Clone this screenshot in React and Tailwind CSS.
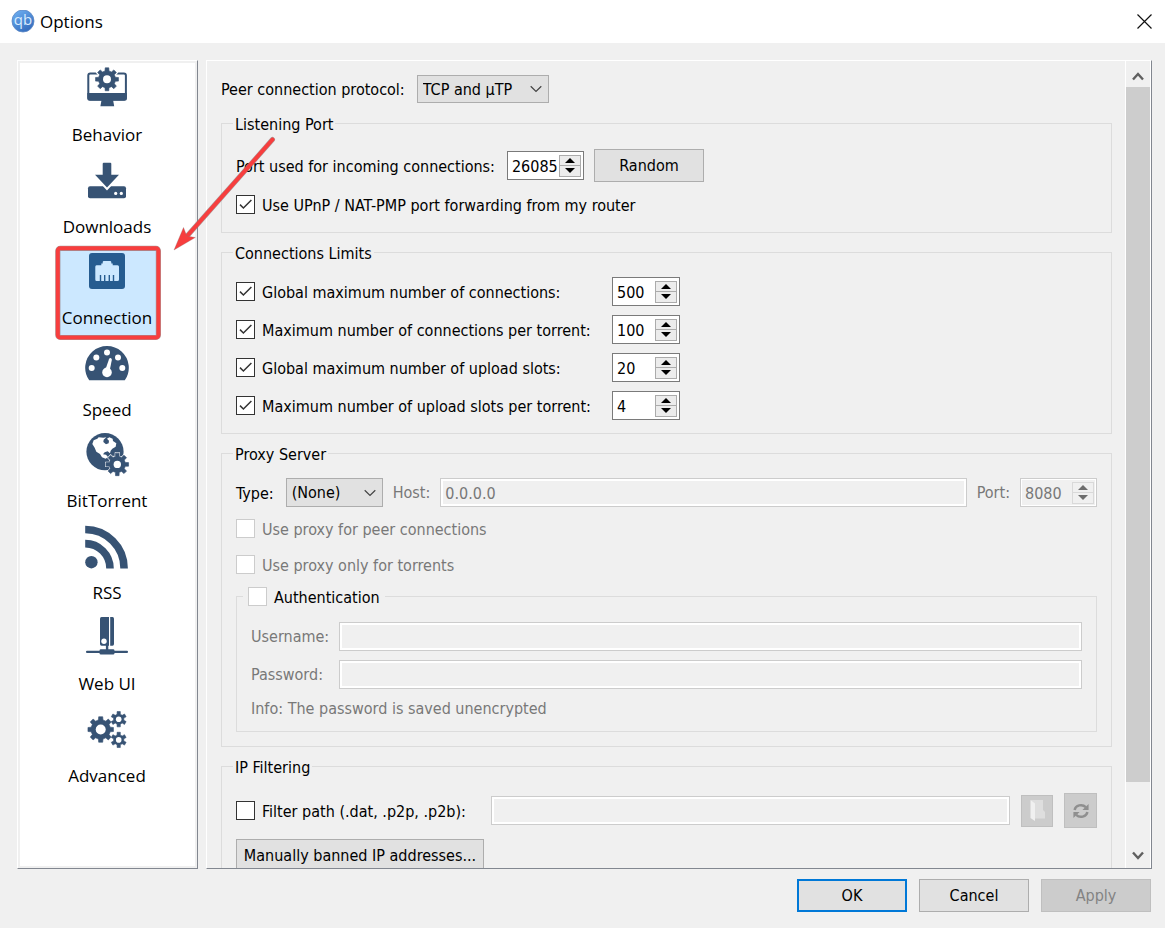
import { useState } from 'react';

const NAVY = '#375374';

function gearPath(cx, cy, outer, inner, teeth) {
  const step = (Math.PI * 2) / teeth;
  const at = (r, a) => `${(cx + r * Math.cos(a)).toFixed(2)} ${(cy + r * Math.sin(a)).toFixed(2)}`;
  const points = [];
  for (let i = 0; i < teeth; i++) {
    const a = i * step - Math.PI / 2;
    points.push(at(inner, a - step * 0.3), at(outer, a - step * 0.2), at(outer, a + step * 0.2), at(inner, a + step * 0.3));
  }
  return `M${points.join('L')}Z`;
}

function Gear({ cx, cy, outer, inner, hole, teeth = 8, halo = 0 }) {
  const d = gearPath(cx, cy, outer, inner, teeth);
  return (
    <>
      {halo > 0 && <path d={d} fill="#fff" stroke="#fff" strokeWidth={halo * 2} />}
      <path d={d} fill={NAVY} stroke={NAVY} strokeWidth="0.6" strokeLinejoin="round" />
      <circle cx={cx} cy={cy} r={hole} fill="#fff" />
    </>
  );
}

function BehaviorIcon() {
  return (
    <>
      <rect x="5.3" y="9.6" width="37.6" height="26" rx="2" fill="#fff" stroke={NAVY} strokeWidth="2" />
      <path d="M4.3 29H43.9V34.2A2.5 2.5 0 0 1 41.4 36.7H30.2L31.2 42.3H17.4L18.4 36.7H6.8A2.5 2.5 0 0 1 4.3 34.2Z" fill={NAVY} />
      <Gear cx={24} cy={15.3} outer={11.6} inner={8.6} hole={4} halo={1.4} />
    </>
  );
}

function DownloadsIcon() {
  return (
    <>
      <rect x="5" y="30.2" width="38" height="12" rx="2" fill={NAVY} />
      <path d="M12 18.8H19.7V7.8Q19.7 6.8 20.7 6.8H27.3Q28.3 6.8 28.3 7.8V18.8H36L24 31.6Z" fill="#fff" stroke="#fff" strokeWidth="4" />
      <path d="M12 18.8H19.7V7.8Q19.7 6.8 20.7 6.8H27.3Q28.3 6.8 28.3 7.8V18.8H36L24 31.6Z" fill={NAVY} />
      <circle cx="32.7" cy="37.4" r="1.6" fill="#fff" />
      <circle cx="38.3" cy="37.4" r="1.6" fill="#fff" />
    </>
  );
}

function ConnectionIcon() {
  return (
    <>
      <rect x="6" y="6" width="36" height="36" rx="3" fill="#265c90" />
      <path d="M13.5 18.3H18.3V16.4H19.7V15.2Q19.7 14 20.9 14H27.1Q28.3 14 28.3 15.2V16.4H29.7V18.3H34.5Q36 18.3 36 19.8V32.5Q36 34 34.5 34H13.5Q12.3 34 12.3 32.5V19.8Q12.3 18.3 13.5 18.3Z" fill="#cce8ff" />
      <path d="M17.5 28V34M21.7 28V34M26.3 28V34M30.5 28V34" stroke="#265c90" strokeWidth="1.4" />
    </>
  );
}

function SpeedIcon() {
  return (
    <>
      <path d="M6.2 41.3A21.8 21.8 0 1 1 41.8 41.3Z" fill={NAVY} />
      <g fill="#fff">
        <circle cx="8.7" cy="29" r="3" />
        <circle cx="13.3" cy="18.5" r="3" />
        <circle cx="24" cy="13.5" r="3" />
        <circle cx="35" cy="18.5" r="3" />
        <circle cx="39.3" cy="29" r="3" />
        <circle cx="24" cy="33.4" r="4.8" />
        <path d="M26 20.2Q26.6 18.8 28 19.2Q29 19.6 28.8 21L26.8 31L22.6 30Z" />
      </g>
    </>
  );
}

function BitTorrentIcon() {
  return (
    <>
      <circle cx="22" cy="21.7" r="18.6" fill={NAVY} />
      <g transform="translate(-43 -95) scale(0.3333)">
        <path
          d="M157 327L161 316L172 311L176 307L190 308L199 307L191 314L190 321L198 328L206 325L207 317L201 311L208 307L218 311L219 318L229 325L227 335L217 341L212 347L210 355L203 349L194 352L189 358L198 359L204 366L197 371L186 367L180 357L169 350L164 338Z"
          fill="#fff"
        />
        <path d="M206 366L222 362L234 372L228 392L222 402L210 388Z" fill="#fff" />
      </g>
      <Gear cx={34.3} cy={34.4} outer={11.4} inner={8.2} hole={3.7} halo={0.8} />
    </>
  );
}

function RssIcon() {
  return (
    <>
      <circle cx="8.4" cy="40.2" r="6.2" fill={NAVY} />
      <path d="M2.2 21.6A24.8 24.8 0 0 1 27 46.4" fill="none" stroke={NAVY} strokeWidth="7.6" />
      <path d="M2.2 7.5A38.9 38.9 0 0 1 41.1 46.4" fill="none" stroke={NAVY} strokeWidth="7.6" />
    </>
  );
}

function WebUiIcon() {
  return (
    <g fill={NAVY}>
      <path d="M18.5 4H26V32.7H18.5Q17 32.7 17 31V5.6Q17 4 18.5 4Z" />
      <path d="M27.2 4H29.6Q31 4 31 5.6V31Q31 32.7 29.6 32.7H27.2Z" />
      <rect x="22.9" y="32" width="2.4" height="6" />
      <rect x="16.6" y="36.2" width="14.8" height="5.2" rx="1.2" />
      <rect x="3" y="37.8" width="42" height="2.2" rx="1" />
      <circle cx="21" cy="28.3" r="2.7" fill="#fff" />
    </g>
  );
}

function AdvancedIcon() {
  return (
    <>
      <Gear cx={17.7} cy={24.5} outer={12.9} inner={9.8} hole={5} />
      <Gear cx={35.7} cy={14.2} outer={7.8} inner={5.2} hole={2.8} teeth={6} />
      <Gear cx={35.7} cy={34.9} outer={7.8} inner={5.2} hole={2.8} teeth={6} />
    </>
  );
}

const SECTIONS = [
  { name: 'Behavior', Icon: BehaviorIcon },
  { name: 'Downloads', Icon: DownloadsIcon },
  { name: 'Connection', Icon: ConnectionIcon },
  { name: 'Speed', Icon: SpeedIcon },
  { name: 'BitTorrent', Icon: BitTorrentIcon },
  { name: 'RSS', Icon: RssIcon },
  { name: 'Web UI', Icon: WebUiIcon },
  { name: 'Advanced', Icon: AdvancedIcon },
];

const LIMITS = [
  { id: 'max-connections', label: 'Global maximum number of connections:', value: '500' },
  { id: 'max-connections-torrent', label: 'Maximum number of connections per torrent:', value: '100' },
  { id: 'max-uploads', label: 'Global maximum number of upload slots:', value: '20' },
  { id: 'max-uploads-torrent', label: 'Maximum number of upload slots per torrent:', value: '4' },
];

function Check({ id, label, defaultChecked = false, disabled = false, muted = disabled }) {
  return (
    <label htmlFor={id} className={muted ? 'flex items-center gap-[7px] text-[#787878]' : 'flex items-center gap-[7px]'}>
      <span className="grid size-[19px] shrink-0 place-items-center">
        <input
          id={id}
          type="checkbox"
          defaultChecked={defaultChecked}
          disabled={disabled}
          className="peer col-start-1 row-start-1 size-[19px] appearance-none border border-[#333333] bg-white disabled:border-[#cccccc]"
        />
        <svg viewBox="0 0 19 19" className="pointer-events-none invisible col-start-1 row-start-1 size-[19px] peer-checked:visible">
          <path d="M4 9.6L7.4 13L15.4 5" fill="none" stroke="#333333" strokeWidth="1.5" />
        </svg>
      </span>
      <span className="pt-[3px] leading-4 whitespace-nowrap">{label}</span>
    </label>
  );
}

function Spin({ id, label, value, disabled = false, wide = false }) {
  const [number, setNumber] = useState(value);
  const bump = (by) => setNumber(String(Math.max(0, Number(number) + by)));

  return (
    <div
      className={`flex h-[29px] shrink-0 items-center border pr-[2px] ${wide ? 'w-[77px]' : 'w-[68px]'} ${
        disabled ? 'border-[#cccccc] bg-[#f0f0f0] text-[#787878] ring-1 ring-white ring-inset' : 'border-[#7a7a7a] bg-white'
      }`}
    >
      <input
        id={id}
        aria-label={label}
        value={number}
        disabled={disabled}
        onChange={(e) => setNumber(e.target.value)}
        className="h-full w-0 min-w-0 flex-1 bg-transparent pt-px pl-1 outline-none"
      />
      <div
        className={
          disabled
            ? 'flex h-[22px] w-[22px] flex-col divide-y divide-[#d9d9d9] border border-[#d9d9d9] text-[#6d6d6d]'
            : 'flex h-[22px] w-[22px] flex-col divide-y divide-[#ababab] border border-[#ababab] bg-[#ececec] text-black'
        }
      >
        <button type="button" aria-label="Increase" disabled={disabled} onClick={() => bump(1)} className="flex flex-1 items-center justify-center">
          <svg viewBox="0 0 10 5" className="h-[5px] w-[10px]">
            <path d="M0 5L5 0L10 5Z" fill="currentColor" />
          </svg>
        </button>
        <button type="button" aria-label="Decrease" disabled={disabled} onClick={() => bump(-1)} className="flex flex-1 items-center justify-center">
          <svg viewBox="0 0 10 5" className="h-[5px] w-[10px]">
            <path d="M0 0L5 5L10 0Z" fill="currentColor" />
          </svg>
        </button>
      </div>
    </div>
  );
}

function Combo({ id, options, className }) {
  return (
    <div className={`relative shrink-0 ${className}`}>
      <select id={id} className="size-full appearance-none border border-[#adadad] bg-[#e1e1e1] pt-px pl-[5px] outline-none">
        {options.map((option) => (
          <option key={option}>{option}</option>
        ))}
      </select>
      <svg viewBox="0 0 12 7" className="pointer-events-none absolute top-1/2 right-[7px] h-[7px] w-3 -translate-y-1/2">
        <path d="M0.7 0.8L6 6L11.3 0.8" fill="none" stroke="#444444" strokeWidth="1.2" />
      </svg>
    </div>
  );
}

function Group({ title, className, children }) {
  return (
    <fieldset className={`mt-[9px] min-w-0 border border-[#dcdcdc] px-[14px] ${className}`}>
      <legend className="-ml-[3px] px-[2px] pt-[3px] leading-[17px]">{title}</legend>
      {children}
    </fieldset>
  );
}

const rowLabel = 'pt-[2px] pr-[2px]';
const disabledLabel = 'pt-px text-[#787878]';
const disabledField = 'h-[29px] min-w-0 flex-1 border border-[#cccccc] bg-[#f0f0f0] px-1 pt-px text-[#787878] ring-2 ring-white ring-inset';
const plainButton = 'border border-[#adadad] bg-[#e1e1e1] pt-px whitespace-nowrap';
const iconButton = 'flex items-center justify-center border border-[#bfbfbf] bg-[#cccccc]';

function ScrollBar() {
  return (
    <div className="flex w-[26px] shrink-0 flex-col border-r border-l border-white bg-[#f0f0f0]">
      <button type="button" aria-label="Scroll up" className="flex h-[26px] items-center justify-center pt-1">
        <svg viewBox="0 0 12 9" className="h-[9px] w-3">
          <path d="M1 7.5L6 2L11 7.5" fill="none" stroke="#606060" strokeWidth="2.4" />
        </svg>
      </button>
      <div className="flex min-h-0 flex-1 flex-col">
        <div className="h-[92%] bg-[#cdcdcd]" />
      </div>
      <button type="button" aria-label="Scroll down" className="flex h-[26px] items-center justify-center">
        <svg viewBox="0 0 12 9" className="h-[9px] w-3">
          <path d="M1 1.5L6 7L11 1.5" fill="none" stroke="#606060" strokeWidth="2.4" />
        </svg>
      </button>
    </div>
  );
}

function ConnectionPage() {
  return (
    <form className="min-w-0 flex-1 overflow-hidden pt-[14px] pr-[13px] pl-[14px]">
      <div className="mb-[10px] flex items-center gap-[10px]">
        <label htmlFor="protocol" className={rowLabel}>Peer connection protocol:</label>
        <Combo id="protocol" options={['TCP and µTP', 'TCP', 'µTP']} className="h-7 w-[132px]" />
      </div>

      <Group title="Listening Port" className="pt-4 pb-[18px]">
        <div className="flex items-center gap-[10px]">
          <label htmlFor="port" className={rowLabel}>Port used for incoming connections:</label>
          <Spin id="port" value="26085" wide />
          <button type="button" className={`h-[33px] w-[110px] ${plainButton}`}>
            Random
          </button>
        </div>
        <div className="mt-[13px]">
          <Check id="upnp" label="Use UPnP / NAT-PMP port forwarding from my router" defaultChecked />
        </div>
      </Group>

      <Group title="Connections Limits" className="pt-[15px] pb-[13px]">
        <div className="flex flex-col gap-[9px]">
          {LIMITS.map((limit) => (
            <div key={limit.id} className="flex items-center">
              <div className="w-[376px]">
                <Check id={limit.id} label={limit.label} defaultChecked />
              </div>
              <Spin label={limit.label} value={limit.value} />
            </div>
          ))}
        </div>
      </Group>

      <Group title="Proxy Server" className="pt-[15px] pb-[14px]">
        <div className="flex items-center gap-[10px]">
          <label htmlFor="proxy-type" className={rowLabel}>Type:</label>
          <Combo id="proxy-type" options={['(None)', 'SOCKS4', 'SOCKS5', 'HTTP']} className="h-[29px] w-[97px]" />
          <label htmlFor="proxy-host" className={disabledLabel}>Host:</label>
          <input id="proxy-host" defaultValue="0.0.0.0" disabled className={disabledField} />
          <label htmlFor="proxy-port" className={disabledLabel}>Port:</label>
          <Spin id="proxy-port" value="8080" disabled wide />
        </div>
        <div className="mt-3 mb-[13px] flex flex-col gap-[17px]">
          <Check id="proxy-peers" label="Use proxy for peer connections" disabled />
          <Check id="proxy-torrents" label="Use proxy only for torrents" disabled />
        </div>
        <fieldset className="min-w-0 border border-[#dcdcdc] px-[14px] pt-4 pb-[13px]">
          <legend className="-ml-2 px-[5px]">
            <Check id="proxy-auth" label="Authentication" disabled muted={false} />
          </legend>
          <div className="grid grid-cols-[88px_1fr] items-center gap-y-[9px] text-[#787878]">
            <label htmlFor="proxy-user" className={disabledLabel}>Username:</label>
            <input id="proxy-user" disabled className={disabledField} />
            <label htmlFor="proxy-pass" className={disabledLabel}>Password:</label>
            <input id="proxy-pass" type="password" disabled className={disabledField} />
            <p className="col-span-2 pt-px leading-[19px]">Info: The password is saved unencrypted</p>
          </div>
        </fieldset>
      </Group>

      <Group title="IP Filtering" className="pt-[17px] pb-4">
        <div className="flex items-center gap-[11px]">
          <div className="w-[244px] shrink-0">
            <Check id="ip-filter" label="Filter path (.dat, .p2p, .p2b):" />
          </div>
          <input aria-label="Filter path" disabled className={disabledField} />
          <button type="button" aria-label="Browse" disabled className={`h-8 w-8 shrink-0 ${iconButton}`}>
            <svg viewBox="0 0 15 21" className="h-[21px] w-[15px]">
              <path d="M1 0H13V10L15 12V18.5H4Z" fill="#dedede" />
              <path d="M0.5 0L5 3.5V21L0.5 18Z" fill="#f0f0f0" />
            </svg>
          </button>
          <button type="button" aria-label="Reload filter" disabled className={`h-[35px] w-[33px] shrink-0 ${iconButton}`}>
            <svg viewBox="0 0 16 16" className="size-4">
              <path d="M1.6 7A6.4 5.6 0 0 1 12.8 4.2M14.4 9A6.4 5.6 0 0 1 3.2 11.8" fill="none" stroke="#8f8f8f" strokeWidth="2.4" />
              <path d="M15.6 1V7H9.4ZM0.4 15V9H6.6Z" fill="#8f8f8f" />
            </svg>
          </button>
        </div>
        <button type="button" className={`mt-[11px] h-[33px] w-[248px] ${plainButton}`}>
          Manually banned IP addresses...
        </button>
      </Group>
    </form>
  );
}

// Red frame and arrow that point out the Connection section
function Callout() {
  return (
    <svg viewBox="0 0 300 360" className="pointer-events-none absolute top-0 left-0 h-[360px] w-[300px]">
      <g fill="none" stroke="#8a7070" strokeOpacity="0.7">
        <rect x="57.8" y="248.3" width="100.6" height="89.2" rx="2.5" strokeWidth="5.2" />
        <path d="M272.5 139.5L188 235" strokeWidth="5" strokeLinecap="round" />
      </g>
      <rect x="57.8" y="248.3" width="100.6" height="89.2" rx="2.5" fill="none" stroke="#f73e3e" strokeWidth="4" />
      <path d="M272.5 139.5L188 235" stroke="#f73e3e" strokeWidth="4" strokeLinecap="round" />
      <path d="M174 250L183.5 227.5L186.8 236L195.3 237.5Z" fill="#f73e3e" stroke="#8a7070" strokeOpacity="0.5" strokeWidth="0.6" />
    </svg>
  );
}

export default function App() {
  const [section, setSection] = useState('Connection');

  return (
    <div className="relative flex h-screen flex-col overflow-hidden bg-[#f0f0f0] font-['DejaVu_Sans_Condensed','Noto_Sans',sans-serif] text-base text-black">
      <header className="flex h-[43px] shrink-0 items-center bg-white pr-[13px] pl-[11px] font-['Open_Sans',sans-serif] text-[17px]">
        <svg viewBox="0 0 24 24" className="size-6">
          <defs>
            <linearGradient id="logo" x1="0" y1="0" x2="0.6" y2="1">
              <stop offset="0" stopColor="#72b4f5" />
              <stop offset="1" stopColor="#356ebf" />
            </linearGradient>
          </defs>
          <circle cx="12" cy="11" r="11" fill="url(#logo)" stroke="#5a86c4" strokeWidth="0.8" />
          <text x="12" y="15" textAnchor="middle" fontSize="15" fill="#d9ecff">qb</text>
        </svg>
        <h1 className="ml-[5px] flex-1">Options</h1>
        <button type="button" aria-label="Close">
          <svg viewBox="0 0 15 15" className="size-[15px]">
            <path d="M0.5 0.5L14.5 14.5M14.5 0.5L0.5 14.5" stroke="#111111" strokeWidth="1.2" />
          </svg>
        </button>
      </header>

      <main className="flex min-h-0 flex-1 gap-2 pt-[17px] pr-[13px] pl-[17px]">
        <nav className="w-[181px] shrink-0 overflow-hidden border border-t-white border-r-[#828790] border-b-[#828790] border-l-white p-[2px]">
          <div className="h-full bg-white pr-px font-['Open_Sans',sans-serif] text-[17px]">
            <div className="mx-auto grid h-[733px] w-[98px] auto-rows-fr pt-px">
              {SECTIONS.map(({ name, Icon }) => (
                <button
                  key={name}
                  type="button"
                  onClick={() => setSection(name)}
                  aria-pressed={name === section}
                  className={name === section ? 'flex flex-col items-center bg-[#cce8ff]' : 'flex flex-col items-center'}
                >
                  <svg viewBox="0 0 48 48" className="size-12 shrink-0">
                    <Icon />
                  </svg>
                  <span className="mt-[11px] leading-6">{name}</span>
                </button>
              ))}
            </div>
          </div>
        </nav>

        <section className="flex min-w-0 flex-1 border border-t-white border-r-[#828790] border-b-[#828790] border-l-white">
          <ConnectionPage />
          <ScrollBar />
        </section>
      </main>

      <footer className="flex shrink-0 justify-end gap-3 pt-[10px] pr-[14px] pb-4">
        <button type="button" className="h-[33px] w-[110px] border-2 border-[#0078d7] bg-[#e1e1e1] pt-px">OK</button>
        <button type="button" className={`h-[33px] w-[110px] ${plainButton}`}>Cancel</button>
        <button type="button" disabled className="h-[33px] w-[110px] border border-[#bfbfbf] bg-[#cccccc] pt-px text-[#838383]">Apply</button>
      </footer>

      <Callout />
    </div>
  );
}
